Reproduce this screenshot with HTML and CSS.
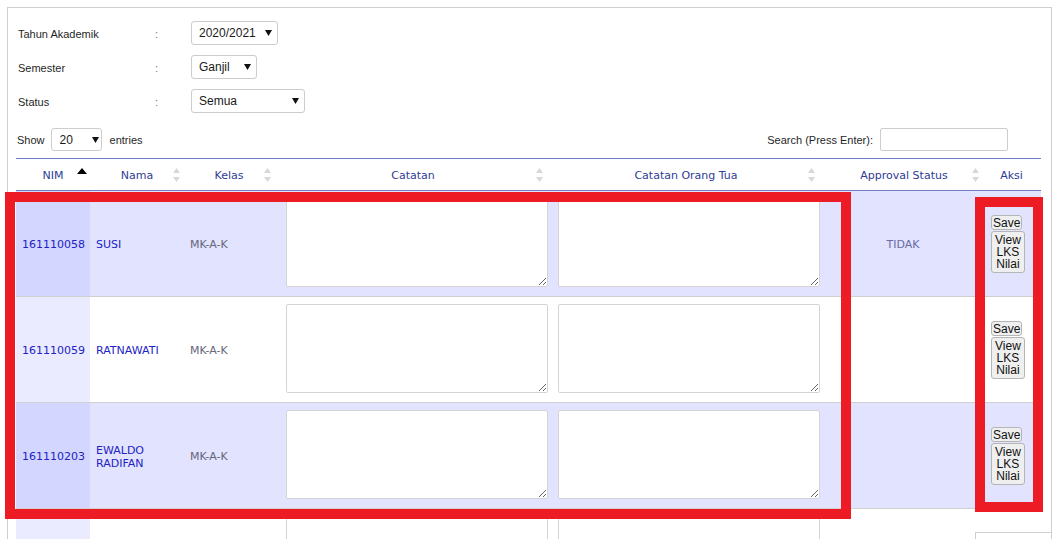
FILE: index.html
```html
<!DOCTYPE html>
<html lang="id">
<head>
<meta charset="utf-8">
<title>Catatan Mahasiswa</title>
<link rel="stylesheet" href="styles.css">
</head>
<body>
<div class="page">
  <div class="panel">
    <div class="filters">
      <span class="f-label">Tahun Akademik</span>
      <span class="f-colon">:</span>
      <span class="sel sel-year"><select><option>2020/2021</option></select><svg class="caret" width="7" height="6" viewBox="0 0 7 6"><polygon points="0,0 7,0 3.5,6"/></svg></span>

      <span class="f-label">Semester</span>
      <span class="f-colon">:</span>
      <span class="sel sel-sem"><select><option>Ganjil</option></select><svg class="caret" width="7" height="6" viewBox="0 0 7 6"><polygon points="0,0 7,0 3.5,6"/></svg></span>

      <span class="f-label">Status</span>
      <span class="f-colon">:</span>
      <span class="sel sel-status"><select><option>Semua</option></select><svg class="caret" width="7" height="6" viewBox="0 0 7 6"><polygon points="0,0 7,0 3.5,6"/></svg></span>
    </div>

    <div class="toolbar">
      <div class="length">
        <span>Show</span>
        <span class="sel sel-len"><select><option>20</option></select><svg class="caret" width="7" height="6" viewBox="0 0 7 6"><polygon points="0,0 7,0 3.5,6"/></svg></span>
        <span>entries</span>
      </div>
      <label class="search">Search (Press Enter): <input type="text"></label>
    </div>

    <table class="grid">
      <colgroup>
        <col class="c-nim"><col class="c-nama"><col class="c-kelas"><col class="c-cat"><col class="c-cot"><col class="c-appr"><col class="c-aksi">
      </colgroup>
      <thead>
        <tr>
          <th class="th-tight">NIM<svg class="sort sort-asc" width="10" height="6" viewBox="0 0 10 6"><polygon points="0,6 10,6 5,0"/></svg></th>
          <th class="th-tight">Nama<svg class="sort sort-nama" width="7" height="14" viewBox="0 0 7 14"><polygon points="0,5 7,5 3.5,0"/><polygon points="0,9 7,9 3.5,14"/></svg></th>
          <th>Kelas<svg class="sort" width="7" height="14" viewBox="0 0 7 14"><polygon points="0,5 7,5 3.5,0"/><polygon points="0,9 7,9 3.5,14"/></svg></th>
          <th>Catatan<svg class="sort" width="7" height="14" viewBox="0 0 7 14"><polygon points="0,5 7,5 3.5,0"/><polygon points="0,9 7,9 3.5,14"/></svg></th>
          <th>Catatan Orang Tua<svg class="sort sort-cot" width="7" height="14" viewBox="0 0 7 14"><polygon points="0,5 7,5 3.5,0"/><polygon points="0,9 7,9 3.5,14"/></svg></th>
          <th>Approval Status<svg class="sort" width="7" height="14" viewBox="0 0 7 14"><polygon points="0,5 7,5 3.5,0"/><polygon points="0,9 7,9 3.5,14"/></svg></th>
          <th>Aksi</th>
        </tr>
      </thead>
      <tbody>
        <tr class="odd">
          <td class="nim">161110058</td>
          <td class="nama">SUSI</td>
          <td class="kelas">MK-A-K</td>
          <td class="note"><textarea></textarea></td>
          <td class="note"><textarea></textarea></td>
          <td class="appr">TIDAK</td>
          <td class="aksi"><div class="btns"><button class="b-save">Save</button><button class="b-view">View<br>LKS<br>Nilai</button></div></td>
        </tr>
        <tr class="even">
          <td class="nim">161110059</td>
          <td class="nama">RATNAWATI</td>
          <td class="kelas">MK-A-K</td>
          <td class="note"><textarea></textarea></td>
          <td class="note"><textarea></textarea></td>
          <td class="appr"></td>
          <td class="aksi"><div class="btns"><button class="b-save">Save</button><button class="b-view">View<br>LKS<br>Nilai</button></div></td>
        </tr>
        <tr class="odd">
          <td class="nim">161110203</td>
          <td class="nama">EWALDO RADIFAN</td>
          <td class="kelas">MK-A-K</td>
          <td class="note"><textarea></textarea></td>
          <td class="note"><textarea></textarea></td>
          <td class="appr"></td>
          <td class="aksi"><div class="btns"><button class="b-save">Save</button><button class="b-view">View<br>LKS<br>Nilai</button></div></td>
        </tr>
        <tr class="even">
          <td class="nim"></td>
          <td class="nama"></td>
          <td class="kelas"></td>
          <td class="note"><textarea></textarea></td>
          <td class="note"><textarea></textarea></td>
          <td class="appr"></td>
          <td class="aksi"></td>
        </tr>
      </tbody>
    </table>
  </div>

  <div class="mark mark-a"></div>
  <div class="mark mark-b"></div>
  <div class="float-box"></div>
</div>
</body>
</html>
```

FILE: styles.css
```css
html, body {
  margin: 0;
  padding: 0;
  background: #ffffff;
}

body {
  font-family: "Liberation Sans", Arial, sans-serif;
  font-size: 11px;
  color: #222222;
  overflow: hidden;
}

.page {
  position: relative;
  width: 1060px;
  height: 539px;
  overflow: hidden;
}

.panel {
  margin: 7px 0 0 7px;
  width: 1045px;
  box-sizing: border-box;
  border: 1px solid #cfcfcf;
  padding: 13px 10px 0 8px;
}

/* filter form */
.filters {
  display: grid;
  grid-template-columns: 137px 36px auto;
  grid-auto-rows: 24px;
  row-gap: 10px;
  align-items: center;
  justify-items: start;
  padding-left: 2px;
}

.f-label {
  font-size: 11px;
  color: #1f1f1f;
  padding-top: 2px;
}

.f-colon {
  color: #777777;
  font-size: 11px;
  padding-top: 2px;
}

.sel {
  position: relative;
  display: inline-block;
  height: 24px;
}

.sel select {
  appearance: none;
  -webkit-appearance: none;
  height: 24px;
  box-sizing: border-box;
  border: 1px solid #cdcdcd;
  border-radius: 3px;
  background: #ffffff;
  font-family: "Liberation Sans", Arial, sans-serif;
  font-size: 12px;
  color: #1a1a1a;
  padding: 0 0 0 7px;
  margin: 0;
  outline: none;
}

.sel .caret {
  position: absolute;
  right: 6px;
  top: 9px;
  fill: #111111;
  pointer-events: none;
}

.sel-year select { width: 87px; }
.sel-sem select { width: 66px; }
.sel-status select { width: 114px; }

.sel-len { height: 23px; }
.sel-len select { width: 51px; height: 23px; padding-left: 8px; }
.sel-len .caret { right: 3px; top: 9px; }

/* toolbar */
.toolbar {
  margin-top: 15px;
  height: 23px;
  display: flex;
  align-items: center;
  justify-content: space-between;
}

.length {
  display: flex;
  align-items: center;
  padding-left: 1px;
  font-size: 11px;
  color: #1f1f1f;
}

.length .sel-len {
  margin: 0 8px 0 6px;
}

.search {
  display: flex;
  align-items: center;
  font-size: 11px;
  color: #1f1f1f;
  margin-right: 33px;
}

.search input {
  margin-left: 7px;
  width: 128px;
  height: 23px;
  box-sizing: border-box;
  border: 1px solid #cdcdcd;
  border-radius: 2px;
  padding: 0 4px;
  outline: none;
}

/* data table */
.grid {
  margin-top: 7px;
  width: 1025px;
  table-layout: fixed;
  border-collapse: separate;
  border-spacing: 0;
  font-family: "DejaVu Sans", Verdana, sans-serif;
  font-size: 11px;
}

.c-nim { width: 74px; }
.c-nama { width: 94px; }
.c-kelas { width: 96px; }
.c-cat { width: 272px; }
.c-cot { width: 274px; }
.c-appr { width: 162px; }
.c-aksi { width: 53px; }

.grid th {
  position: relative;
  height: 33px;
  box-sizing: border-box;
  padding: 1px 12px 0 6px;
  border-top: 1px solid #6d80c4;
  border-bottom: 1px solid #6d80c4;
  font-weight: normal;
  color: #2e3c94;
  text-align: center;
  white-space: nowrap;
}

.grid th.th-tight {
  padding: 1px 6px 0 6px;
}

.sort {
  position: absolute;
  right: 9px;
  top: 9px;
  fill: #d8d8d8;
}

.sort-nama { right: 4px; }
.sort-cot { right: 11px; }

.sort-asc {
  right: 3px;
  top: 9px;
  fill: #000000;
}

.grid td {
  padding: 2px 6px 0;
  vertical-align: middle;
  line-height: 13px;
  border-bottom: 1px solid #d0d0d0;
}

.grid tr.odd td { background: #e2e4ff; }
.grid tr.odd td.nim { background: #d3d6ff; }
.grid tr.even td { background: #ffffff; }
.grid tr.even td.nim { background: #eaebff; }

.grid td.nim,
.grid td.nama {
  color: #2222c4;
}

.grid td.kelas {
  color: #66667a;
}

.grid td.note {
  padding: 7px 4px 9px 6px;
}

.grid textarea {
  display: block;
  width: 262px;
  height: 89px;
  box-sizing: border-box;
  margin: 0;
  border: 1px solid #d4d4d4;
  border-radius: 2px;
  background: #ffffff;
  font-family: "Liberation Sans", Arial, sans-serif;
  font-size: 12px;
}

.grid td.appr {
  text-align: center;
  color: #6a6aa6;
  padding: 2px 10px 0 2px;
}

.grid td.aksi {
  padding: 0 0 0 3px;
}

.btns {
  display: flex;
  flex-direction: column;
  align-items: flex-start;
  gap: 1px;
}

.btns button {
  font-family: "Liberation Sans", Arial, sans-serif;
  font-size: 12px;
  line-height: 12px;
  color: #111111;
  background: #efefef;
  border: 1px solid #b5b5b5;
  border-radius: 3px;
  margin: 0;
  text-align: center;
}

.btns .b-save {
  padding: 1px 1px 0;
  height: 15px;
}

.btns .b-view {
  padding: 2px 3px;
}

/* annotation overlays */
.mark {
  position: absolute;
  box-sizing: border-box;
  border: 10px solid #ed1c24;
  pointer-events: none;
}

.mark-a {
  left: 5px;
  top: 192px;
  width: 846px;
  height: 327px;
}

.mark-b {
  left: 975px;
  top: 197px;
  width: 68px;
  height: 315px;
}

.float-box {
  position: absolute;
  left: 975px;
  top: 532px;
  width: 77px;
  height: 30px;
  box-sizing: border-box;
  border: 1px solid #cfcfcf;
  background: #ffffff;
}
```
